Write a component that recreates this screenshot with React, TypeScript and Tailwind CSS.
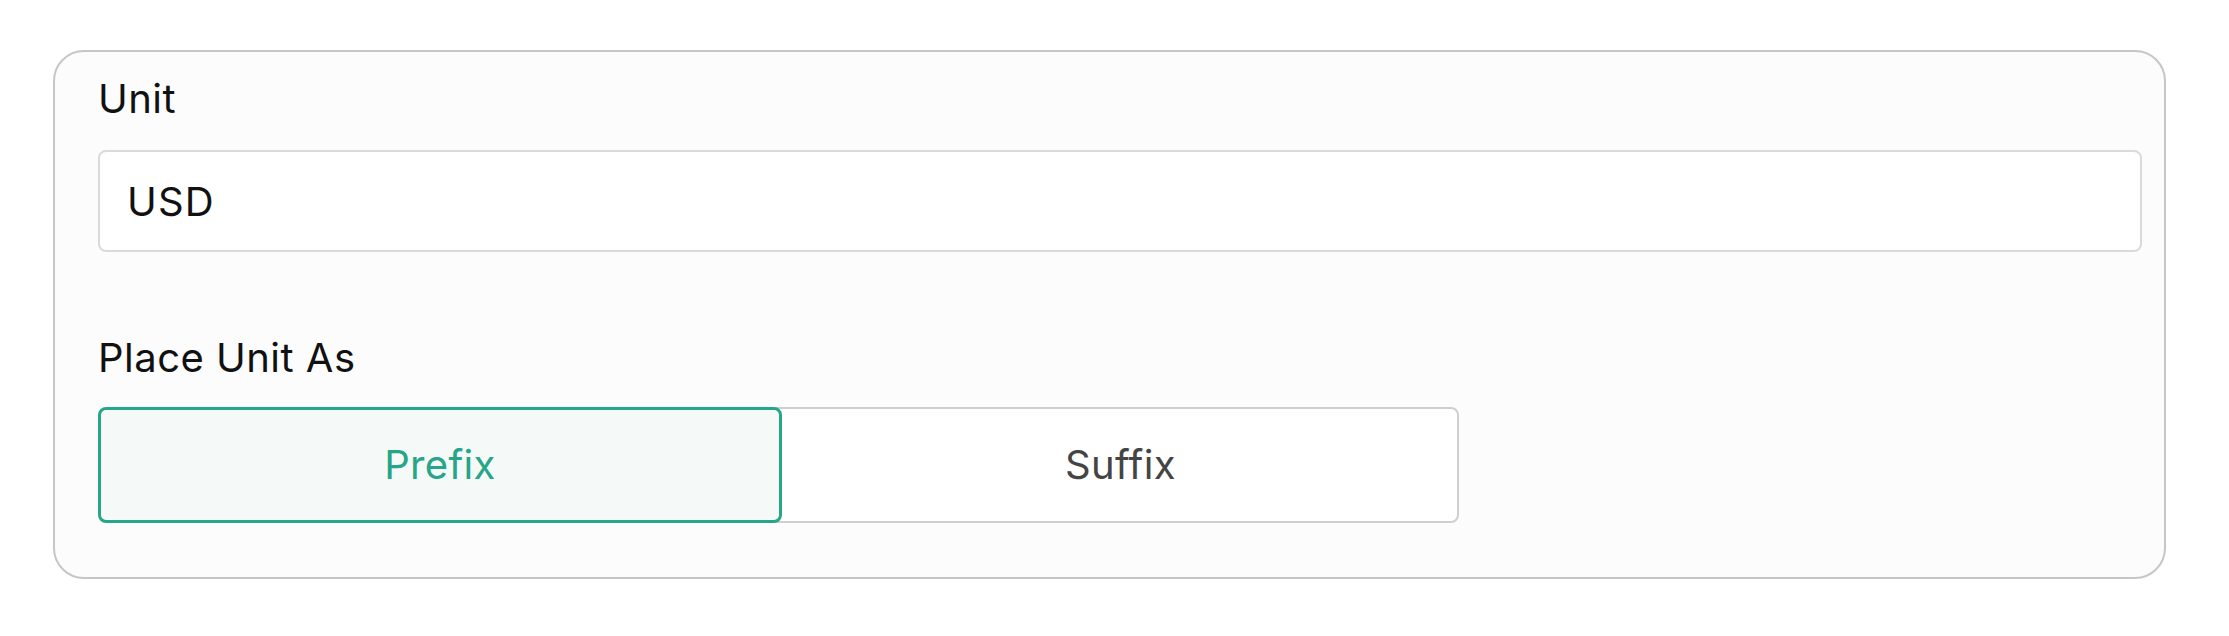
import React, { useState } from 'react';

type Placement = 'prefix' | 'suffix';

const App: React.FC = () => {
  const [unit, setUnit] = useState<string>('USD');
  const [placement, setPlacement] = useState<Placement>('prefix');

  return (
    <div className="min-h-screen bg-white pt-[50px] pl-[53px] font-['Inter','Liberation_Sans',sans-serif] tracking-[0.03em]">
      <div className="w-[2113px] h-[529px] rounded-[31px] border-2 border-[#c6c6c6] bg-[#fcfcfc] pl-[43px] pr-[22px] pt-[24px]">
        <label htmlFor="unit" className="block text-[40px] leading-[46px] text-[#111111]">
          Unit
        </label>
        <input
          id="unit"
          type="text"
          value={unit}
          onChange={(e) => setUnit(e.target.value)}
          className="mt-[28px] block w-[2044px] h-[102px] rounded-[8px] border-2 border-[#dadada] bg-white px-[27px] text-[40px] leading-[46px] tracking-[0.03em] text-[#111111] outline-none"
        />

        <div className="mt-[83px] text-[40px] leading-[46px] text-[#111111]">Place Unit As</div>

        <div className="mt-[26px] flex w-[1361px] h-[116px] tracking-[0.02em]">
          <button
            type="button"
            onClick={() => setPlacement('prefix')}
            className={
              placement === 'prefix'
                ? 'relative z-10 w-[684px] h-full rounded-[8px] border-[3px] border-[#26a68a] bg-[#f5f9f8] text-[40px] leading-[46px] text-[#27a588]'
                : 'relative w-[684px] h-full rounded-l-[8px] border-2 border-[#cfcfcf] bg-white text-[40px] leading-[46px] text-[#444444]'
            }
          >
            Prefix
          </button>
          <button
            type="button"
            onClick={() => setPlacement('suffix')}
            className={
              placement === 'suffix'
                ? 'relative z-10 -ml-[10px] flex-1 h-full rounded-[8px] border-[3px] border-[#26a68a] bg-[#f5f9f8] pl-[10px] text-[40px] leading-[46px] text-[#27a588]'
                : 'relative -ml-[10px] flex-1 h-full rounded-r-[8px] border-2 border-[#cfcfcf] bg-white pl-[10px] text-[40px] leading-[46px] text-[#444444]'
            }
          >
            Suffix
          </button>
        </div>
      </div>
    </div>
  );
};

export default App;
